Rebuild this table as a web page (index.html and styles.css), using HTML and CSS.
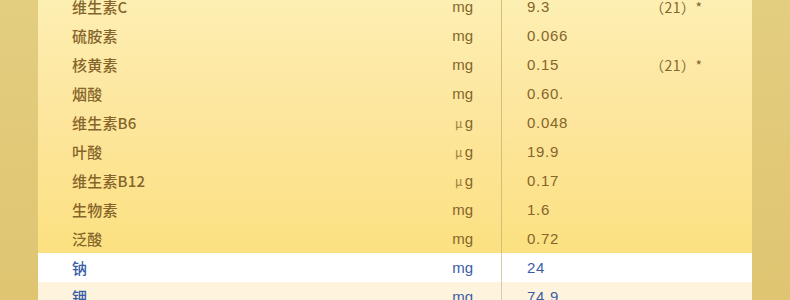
FILE: index.html
```html
<!DOCTYPE html>
<html lang="zh">
<head>
<meta charset="utf-8">
<link rel="stylesheet" href="styles.css">
</head>
<body>
<div class="page">
  <div class="side"></div>
  <div class="table">
    <div class="row"><span class="name">维生素C</span><span class="unit">mg</span><span class="val">9.3</span><span class="note">（21）*</span></div>
    <div class="row"><span class="name">硫胺素</span><span class="unit">mg</span><span class="val">0.066</span><span class="note"></span></div>
    <div class="row"><span class="name">核黄素</span><span class="unit">mg</span><span class="val">0.15</span><span class="note">（21）*</span></div>
    <div class="row"><span class="name">烟酸</span><span class="unit">mg</span><span class="val">0.60.</span><span class="note"></span></div>
    <div class="row"><span class="name">维生素B6</span><span class="unit"><span class="mu">μ</span>g</span><span class="val">0.048</span><span class="note"></span></div>
    <div class="row"><span class="name">叶酸</span><span class="unit"><span class="mu">μ</span>g</span><span class="val">19.9</span><span class="note"></span></div>
    <div class="row"><span class="name">维生素B12</span><span class="unit"><span class="mu">μ</span>g</span><span class="val">0.17</span><span class="note"></span></div>
    <div class="row"><span class="name">生物素</span><span class="unit">mg</span><span class="val">1.6</span><span class="note"></span></div>
    <div class="row"><span class="name">泛酸</span><span class="unit">mg</span><span class="val">0.72</span><span class="note"></span></div>
    <div class="row mineral white"><span class="name">钠</span><span class="unit">mg</span><span class="val">24</span><span class="note"></span></div>
    <div class="row mineral cream"><span class="name">钾</span><span class="unit">mg</span><span class="val">74.9</span><span class="note"></span></div>
  </div>
  <div class="side"></div>
</div>
</body>
</html>
```
FILE: styles.css
```css
html, body {
  margin: 0;
  padding: 0;
}
body {
  width: 790px;
  height: 300px;
  overflow: hidden;
  background: #e1c977;
  font-family: "Liberation Sans", "Noto Sans CJK SC", sans-serif;
}
.page {
  display: flex;
  height: 300px;
}
.side {
  flex: 0 0 38px;
  background: linear-gradient(#e3cd7f, #dfc572);
}
.table {
  flex: 0 0 714px;
  background: linear-gradient(#fdefb4 0px, #fde59a 140px, #fce183 250px);
  margin-top: -8px;
  padding-bottom: 40px;
}
.row {
  display: grid;
  grid-template-columns: 392px 71px 157px 1fr;
  height: 29px;
  align-items: stretch;
  color: #85652a;
  font-size: 15px;
}
.row > span {
  display: flex;
  align-items: center;
}
.name {
  padding-left: 34px;
  font-family: "Noto Sans CJK SC", sans-serif;
  font-weight: 500;
  font-size: 15px;
  letter-spacing: 0.2px;
}
.unit {
  justify-content: flex-end;
  padding-right: 28px;
}
.mu {
  font-family: "Noto Sans CJK SC", sans-serif;
  font-size: 12px;
  opacity: 0.8;
  margin-right: 2px;
}
.val {
  border-left: 1px solid #d3bd7c;
  padding-left: 25px;
  letter-spacing: 0.7px;
}
.note {
  font-family: "Noto Sans CJK SC", sans-serif;
  font-size: 14px;
  margin-left: -8px;
  letter-spacing: 0.5px;
}
.mineral {
  color: #3a5ca6;
}
.white {
  background: #ffffff;
}
.cream {
  background: #fef4dd;
}
.white .val, .cream .val {
  border-left-color: #d9ccab;
}
```
